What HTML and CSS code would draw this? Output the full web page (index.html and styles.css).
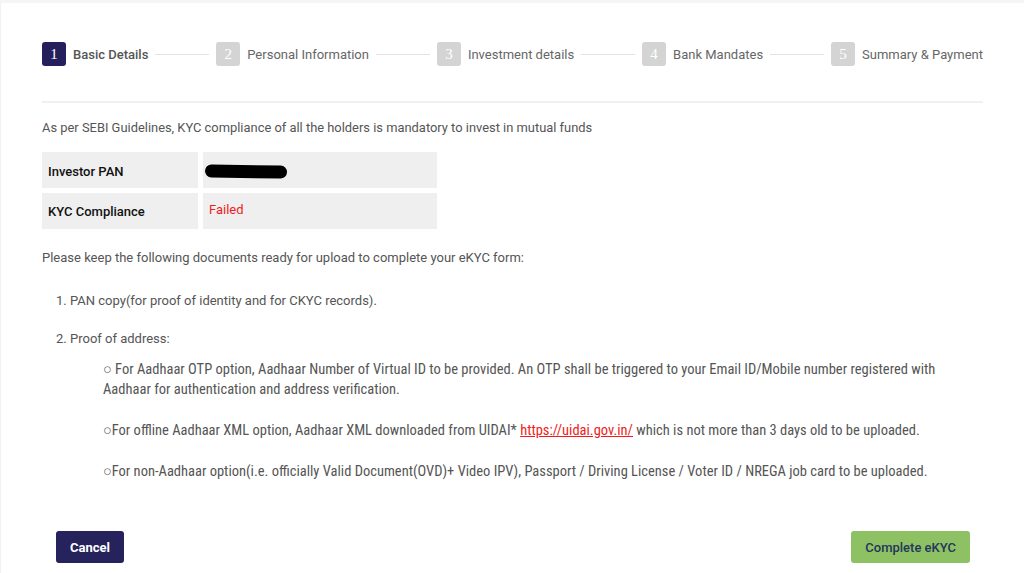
FILE: index.html
```html
<!DOCTYPE html>
<html lang="en">
<head>
  <meta charset="UTF-8" />
  <meta name="viewport" content="width=device-width, initial-scale=1.0" />
  <title>eKYC - Basic Details</title>
  <link rel="stylesheet" href="styles.css">
</head>
<body>
  <div class="page">
    <div class="stepper">
      <div class="step active"><span class="step-num">1</span><span class="step-label">Basic Details</span></div>
      <div class="step-line"></div>
      <div class="step"><span class="step-num">2</span><span class="step-label">Personal Information</span></div>
      <div class="step-line"></div>
      <div class="step"><span class="step-num">3</span><span class="step-label">Investment details</span></div>
      <div class="step-line"></div>
      <div class="step"><span class="step-num">4</span><span class="step-label">Bank Mandates</span></div>
      <div class="step-line"></div>
      <div class="step"><span class="step-num">5</span><span class="step-label">Summary &amp; Payment</span></div>
    </div>

    <div class="divider"></div>

    <p class="intro">As per SEBI Guidelines, KYC compliance of all the holders is mandatory to invest in mutual funds</p>

    <div class="kyc-table">
      <div class="kyc-label">Investor PAN</div>
      <div class="kyc-value"><span class="masked"></span></div>
      <div class="kyc-label">KYC Compliance</div>
      <div class="kyc-value failed">Failed</div>
    </div>

    <p class="docs-title">Please keep the following documents ready for upload to complete your eKYC form:</p>

    <ol class="docs">
      <li>PAN copy(for proof of identity and for CKYC records).</li>
      <li>Proof of address:
        <div class="options">
          <p>○ For Aadhaar OTP option, Aadhaar Number of Virtual ID to be provided. An OTP shall be triggered to your Email ID/Mobile number registered with Aadhaar for authentication and address verification.</p>
          <p>○For offline Aadhaar XML option, Aadhaar XML downloaded from UIDAI* <a href="#">https://uidai.gov.in/</a> which is not more than 3 days old to be uploaded.</p>
          <p>○For non-Aadhaar option(i.e. officially Valid Document(OVD)+ Video IPV), Passport / Driving License / Voter ID / NREGA job card to be uploaded.</p>
        </div>
      </li>
    </ol>

    <div class="actions">
      <button class="btn btn-cancel">Cancel</button>
      <button class="btn btn-complete">Complete eKYC</button>
    </div>
  </div>
</body>
</html>
```

FILE: styles.css
```css
* {
  box-sizing: border-box;
  margin: 0;
  padding: 0;
  font-family: 'Roboto', sans-serif;
}

body {
  background: #fff;
  color: #555;
  font-size: 13px;
}

.page {
  border-top: 3px solid #f5f5f5;
  border-left: 1px solid #f2f2f2;
  min-height: 573px;
  padding: 39px 41px 0 41px;
}

.stepper {
  display: flex;
  align-items: center;
  gap: 7px;
  height: 24px;
}

.step {
  display: flex;
  align-items: center;
  gap: 7px;
}

.step-num {
  width: 24px;
  height: 24px;
  border-radius: 3px;
  background: #d4d4d4;
  color: #fff;
  font-family: 'Liberation Serif', serif;
  font-size: 15px;
  display: flex;
  align-items: center;
  justify-content: center;
}

.step.active .step-num {
  background: #25205c;
}

.step-label {
  font-size: 13px;
  color: #666;
}

.step.active .step-label {
  color: #555;
  font-weight: 500;
}

.step-line {
  flex: 1;
  height: 1px;
  background: #e2e2e2;
}

.divider {
  height: 2px;
  background: #f0f0f0;
  margin: 35px 0 0;
}

.intro {
  margin-top: 16px;
  line-height: 18px;
  font-size: 12.9px;
}

.kyc-table {
  display: grid;
  grid-template-columns: 156px 234px;
  grid-auto-rows: 36px;
  column-gap: 5px;
  row-gap: 5px;
  margin-top: 15px;
}

.kyc-label,
.kyc-value {
  background: #efefef;
  display: flex;
  align-items: center;
  padding: 0 6px;
}

.kyc-label {
  color: #111;
  font-weight: 500;
}

.kyc-label:first-child {
  padding-top: 2px;
}

.kyc-value.failed {
  color: #f01c1c;
  padding-bottom: 4px;
}

.masked {
  display: block;
  width: 82px;
  height: 13px;
  background: #000;
  border-radius: 7px;
  margin-top: 2px;
  margin-left: -4px;
  transform: rotate(1deg);
}

.docs-title {
  margin-top: 20px;
  line-height: 18px;
}

.docs {
  margin-top: 25px;
  padding-left: 28px;
  line-height: 18px;
}

.docs li {
  margin-bottom: 20px;
}

.options {
  margin-top: 12px;
  padding-left: 33px;
  padding-right: 30px;
}

.options p {
  font-size: 14.5px;
  line-height: 20px;
  margin-bottom: 21px;
  font-stretch: condensed;
}

.options a {
  color: #ee1c1c;
}

.actions {
  display: flex;
  justify-content: space-between;
  padding: 0 13px 0 14px;
  margin-top: 49px;
}

.btn {
  height: 32px;
  border: none;
  border-radius: 3px;
  font-size: 13px;
  font-weight: 700;
  padding: 0 14px;
  cursor: pointer;
}

.btn-cancel {
  background: #25225c;
  color: #fff;
}

.btn-complete {
  background: #8dc163;
  color: #25355d;
  font-weight: 500;
}
```
